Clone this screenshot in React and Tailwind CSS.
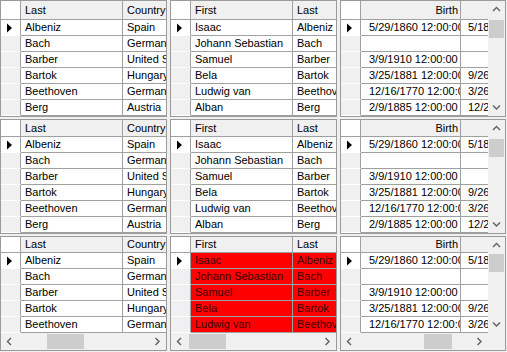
import clsx from "clsx";

const composers = [
  { first: "Isaac", last: "Albeniz", country: "Spain", birth: "5/29/1860 12:00:00 AM", death: "5/18/1909 12:00:00 AM" },
  { first: "Johann Sebastian", last: "Bach", country: "Germany", birth: "", death: "" },
  { first: "Samuel", last: "Barber", country: "United States", birth: "3/9/1910 12:00:00 AM", death: "" },
  { first: "Bela", last: "Bartok", country: "Hungary", birth: "3/25/1881 12:00:00 AM", death: "9/26/1945 12:00:00 AM" },
  { first: "Ludwig van", last: "Beethoven", country: "Germany", birth: "12/16/1770 12:00:00 AM", death: "3/26/1827 12:00:00 AM" },
  { first: "Alban", last: "Berg", country: "Austria", birth: "2/9/1885 12:00:00 AM", death: "12/24/1935 12:00:00 AM" },
];

const views = {
  names: [
    { key: "last", title: "Last", w: "w-[102px]", pad: "pl-[4px]" },
    { key: "country", title: "Country", w: "w-[102px]", pad: "pl-[4px]" },
  ],
  people: [
    { key: "first", title: "First", w: "w-[102px]", pad: "pl-[4px]" },
    { key: "last", title: "Last", w: "w-[102px]", pad: "pl-[4px]" },
  ],
  dates: [
    { key: "birth", title: "Birth", w: "w-[100px]", pad: "pl-[8px]", right: true },
    { key: "death", title: "", w: "w-[100px]", pad: "pl-[7px]" },
  ],
};

function Chevron({ dir }) {
  const d = {
    up: "M1 5 L4.5 1.5 L8 5",
    down: "M1 1.5 L4.5 5 L8 1.5",
    left: "M5 1 L1.5 4.5 L5 8",
    right: "M1.5 1 L5 4.5 L1.5 8",
  }[dir];
  const vertical = dir === "up" || dir === "down";
  return (
    <svg width={vertical ? 9 : 7} height={vertical ? 7 : 9} viewBox={vertical ? "0 0 9 7" : "0 0 7 9"}>
      <path d={d} stroke="#606060" strokeWidth="1.4" fill="none" />
    </svg>
  );
}

function VScroll({ gap }) {
  return (
    <div className="flex w-[17px] shrink-0 flex-col bg-[#f0f0f0]">
      <div className="flex h-[17px] shrink-0 items-center justify-center">
        <Chevron dir="up" />
      </div>
      <div className={clsx("flex-1 px-px", gap)}>
        <div className="h-[18px] bg-[#cdcdcd]" />
      </div>
      <div className="flex h-[17px] shrink-0 items-center justify-center">
        <Chevron dir="down" />
      </div>
    </div>
  );
}

function HScroll({ thumb, corner }) {
  return (
    <div className="flex h-[17px] shrink-0 bg-[#f0f0f0]">
      <div className="flex w-[17px] shrink-0 items-center justify-center">
        <Chevron dir="left" />
      </div>
      <div className="flex flex-1 py-px">
        <div className={clsx("h-full bg-[#cdcdcd]", thumb)} />
      </div>
      <div className="flex w-[17px] shrink-0 items-center justify-center">
        <Chevron dir="right" />
      </div>
      {corner && <div className="w-[17px] shrink-0 bg-[#f0f0f0]" />}
    </div>
  );
}

function Arrow() {
  return (
    <svg width="6" height="10" viewBox="0 0 6 10">
      <polygon points="0,0.5 5,5 0,9.5" fill="#000" />
    </svg>
  );
}

function Panel({ view, rows, headerH, red, vscroll, hthumb, vgap }) {
  const cols = views[view];
  return (
    <div className="flex min-h-0 min-w-0 flex-col overflow-hidden border border-[#9a9a9a] bg-white">
      <div className="flex min-h-0 flex-1">
        <div className="min-w-0 flex-1 overflow-hidden">
          <div className={clsx("flex", headerH)}>
            <div className="h-full w-[20px] shrink-0 border-r border-b border-[#a0a0a0] bg-white" />
            {cols.map((c) => (
              <div
                key={c.key}
                className={clsx(
                  "flex h-full shrink-0 items-center overflow-hidden whitespace-nowrap border-r border-b border-[#a0a0a0] bg-[#f0f0f0]",
                  c.w,
                  c.right ? "justify-end pr-[2px]" : "pl-[4px]"
                )}
              >
                {c.title}
              </div>
            ))}
          </div>
          {composers.slice(0, rows).map((p, i) => (
            <div key={p.last} className="flex h-[16px]">
              <div
                className={clsx(
                  "flex h-full w-[20px] shrink-0 items-center border-r border-b border-r-[#a0a0a0] border-b-white pl-[6px]",
                  i === 0 ? "bg-white" : "bg-[#f0f0f0]"
                )}
              >
                {i === 0 && <Arrow />}
              </div>
              {cols.map((c) => (
                <div
                  key={c.key}
                  className={clsx(
                    "h-full shrink-0 overflow-hidden whitespace-nowrap border-r border-b border-[#a0a0a0] leading-[15px]",
                    c.w,
                    c.pad,
                    red ? "bg-[#ff0000] text-[#3a0000]" : "bg-white"
                  )}
                >
                  {p[c.key]}
                </div>
              ))}
            </div>
          ))}
        </div>
        {vscroll && <VScroll gap={vgap} />}
      </div>
      {hthumb && <HScroll thumb={hthumb} corner={vscroll} />}
    </div>
  );
}

export default function App() {
  return (
    <div className="grid h-[352px] w-[507px] grid-cols-[167px_167px_166px] grid-rows-[117px_115px_115px] gap-x-[3px] gap-y-[2px] bg-[#f0f0f0] font-['Liberation_Sans',Arial,sans-serif] text-[11px] text-black">
      <Panel view="names" rows={6} headerH="h-[19px]" />
      <Panel view="people" rows={6} headerH="h-[19px]" />
      <Panel view="dates" rows={6} headerH="h-[19px]" vscroll vgap="pt-[2px]" />

      <Panel view="names" rows={6} headerH="h-[17px]" />
      <Panel view="people" rows={6} headerH="h-[17px]" />
      <Panel view="dates" rows={6} headerH="h-[17px]" vscroll vgap="pt-[2px]" />

      <Panel view="names" rows={5} headerH="h-[16px]" hthumb="ml-[29px] w-[37px]" />
      <Panel view="people" rows={5} headerH="h-[16px]" red hthumb="ml-[1px] w-[37px]" />
      <Panel view="dates" rows={5} headerH="h-[16px]" vscroll vgap="pt-0" hthumb="ml-[66px] w-[28px]" />
    </div>
  );
}
